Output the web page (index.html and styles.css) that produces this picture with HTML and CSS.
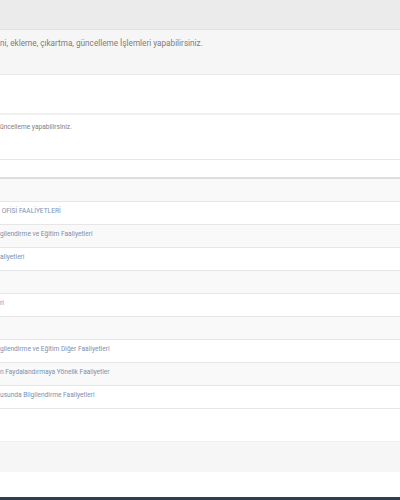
FILE: index.html
```html
<!DOCTYPE html>
<html>
<head>
<meta charset="utf-8">
<link rel="stylesheet" href="styles.css">
</head>
<body>
<div class="page">
  <div class="top-bar"></div>
  <div class="info-band"><span class="info-text">ni, ekleme, çıkartma, güncelleme İşlemleri yapabilirsiniz.</span></div>
  <div class="spacer-a"></div>
  <div class="panel">
    <div class="panel-body"><span class="hint">üncelleme yapabilirsiniz.</span></div>
    <div class="panel-gap"></div>
    <table class="list">
      <tbody>
        <tr><td></td></tr>
        <tr><td><a>&nbsp;OFİSİ FAALİYETLERİ</a></td></tr>
        <tr><td><a>gilendirme ve Eğitim Faaliyetleri</a></td></tr>
        <tr><td><a>aliyetleri</a></td></tr>
        <tr><td></td></tr>
        <tr><td><a>ri</a></td></tr>
        <tr><td></td></tr>
        <tr><td><a>gilendirme ve Eğitim Diğer Faaliyetleri</a></td></tr>
        <tr><td><a>n Faydalandırmaya Yönelik Faaliyetler</a></td></tr>
        <tr><td><a>usunda Bilgilendirme Faaliyetleri</a></td></tr>
      </tbody>
    </table>
    <div class="panel-foot"></div>
  </div>
  <div class="grey-strip"></div>
  <div class="white-strip"></div>
  <div class="footer"></div>
</div>
</body>
</html>
```
FILE: styles.css
```css
html, body {
  margin: 0;
  padding: 0;
  background: #ffffff;
  font-family: Roboto, "Liberation Sans", Arial, sans-serif;
}
.page {
  width: 400px;
  height: 500px;
  overflow: hidden;
  display: flex;
  flex-direction: column;
}
.top-bar {
  height: 29px;
  background: #ebebeb;
  border-bottom: 1px solid #e3e3e3;
  flex: none;
}
.info-band {
  height: 44px;
  background: #f6f6f6;
  border-bottom: 1px solid #e8e8e8;
  flex: none;
}
.info-text {
  display: block;
  padding-top: 8px;
  font-size: 8.2px;
  line-height: 11px;
  color: #7c7c7c;
  white-space: nowrap;
}
.spacer-a {
  height: 38px;
  flex: none;
}
.panel {
  border-top: 2px solid #f0f0f3;
  flex: none;
}
.panel-body {
  height: 44px;
  border-bottom: 1px solid #e6e6e6;
}
.hint {
  display: block;
  padding-top: 8px;
  font-size: 6.6px;
  line-height: 9px;
  color: #808080;
  white-space: nowrap;
}
.panel-gap {
  height: 17px;
}
.list {
  width: 100%;
  border-collapse: collapse;
  border-top: 2px solid #dedede;
}
.list td {
  height: 22px;
  padding: 0;
  border-bottom: 1px solid #e6e6e6;
  font-size: 6.6px;
  line-height: 9px;
  white-space: nowrap;
  vertical-align: middle;
}
.list tr:nth-child(odd) td {
  background: #f9f9f9;
}
.list a {
  color: #7c8fae;
  display: block;
  padding-bottom: 3px;
}
.panel-foot {
  height: 32px;
}
.grey-strip {
  height: 30px;
  background: #f6f6f6;
  border-top: 1px solid #f0f0f0;
  flex: none;
}
.white-strip {
  height: 25px;
  flex: none;
}
.footer {
  height: 3px;
  background: #2c3e50;
  flex: none;
}
```
